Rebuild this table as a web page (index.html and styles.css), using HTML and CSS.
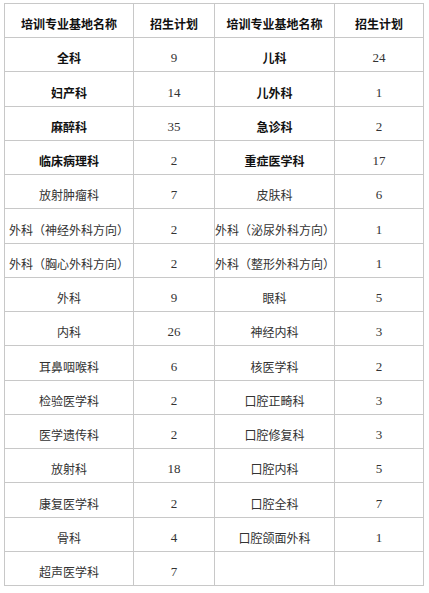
FILE: index.html
```html
<!DOCTYPE html>
<html lang="zh-CN">
<head>
<meta charset="utf-8">
<link rel="stylesheet" href="styles.css">
</head>
<body>
<table class="plan">
  <colgroup>
    <col class="c-name1"><col class="c-num1"><col class="c-name2"><col class="c-num2">
  </colgroup>
  <tr class="r34 head"><td>培训专业基地名称</td><td>招生计划</td><td>培训专业基地名称</td><td>招生计划</td></tr>
  <tr class="r34"><td class="b">全科</td><td class="n">9</td><td class="b">儿科</td><td class="n">24</td></tr>
  <tr class="r35"><td class="b">妇产科</td><td class="n">14</td><td class="b">儿外科</td><td class="n">1</td></tr>
  <tr class="r34"><td class="b">麻醉科</td><td class="n">35</td><td class="b">急诊科</td><td class="n">2</td></tr>
  <tr class="r34"><td class="b">临床病理科</td><td class="n">2</td><td class="b">重症医学科</td><td class="n">17</td></tr>
  <tr class="r34"><td>放射肿瘤科</td><td class="n">7</td><td>皮肤科</td><td class="n">6</td></tr>
  <tr class="r35"><td>外科（神经外科方向）</td><td class="n">2</td><td>外科（泌尿外科方向）</td><td class="n">1</td></tr>
  <tr class="r34"><td>外科（胸心外科方向）</td><td class="n">2</td><td>外科（整形外科方向）</td><td class="n">1</td></tr>
  <tr class="r34"><td>外科</td><td class="n">9</td><td>眼科</td><td class="n">5</td></tr>
  <tr class="r34"><td>内科</td><td class="n">26</td><td>神经内科</td><td class="n">3</td></tr>
  <tr class="r35"><td>耳鼻咽喉科</td><td class="n">6</td><td>核医学科</td><td class="n">2</td></tr>
  <tr class="r34"><td>检验医学科</td><td class="n">2</td><td>口腔正畸科</td><td class="n">3</td></tr>
  <tr class="r34"><td>医学遗传科</td><td class="n">2</td><td>口腔修复科</td><td class="n">3</td></tr>
  <tr class="r34"><td>放射科</td><td class="n">18</td><td>口腔内科</td><td class="n">5</td></tr>
  <tr class="r35"><td>康复医学科</td><td class="n">2</td><td>口腔全科</td><td class="n">7</td></tr>
  <tr class="r34"><td>骨科</td><td class="n">4</td><td>口腔颌面外科</td><td class="n">1</td></tr>
  <tr class="r34"><td>超声医学科</td><td class="n">7</td><td></td><td></td></tr>
</table>
</body>
</html>
```
FILE: styles.css
```css
html, body {
  margin: 0;
  padding: 0;
  background: #ffffff;
}
body {
  padding: 3px 0 0 4px;
  font-family: "Noto Sans CJK SC", "Noto Sans", sans-serif;
  font-size: 12px;
  color: #333333;
}
.plan {
  border-collapse: collapse;
  table-layout: fixed;
  width: 420px;
}
.c-name1 { width: 129px; }
.c-num1 { width: 81px; }
.c-name2 { width: 120px; }
.c-num2 { width: 89px; }
.plan td {
  border: 1px solid #c8c8c8;
  text-align: center;
  vertical-align: middle;
  padding: 7px 0 0 0;
  line-height: 14px;
  white-space: nowrap;
  overflow: hidden;
}
.r34 td { height: 26px; }
.r35 td { height: 27px; }
.head td {
  font-weight: bold;
  color: #111111;
}
.plan td.b {
  font-weight: bold;
  color: #111111;
}
.plan td.n {
  font-family: "Liberation Serif", "Noto Sans CJK SC", serif;
  font-size: 13px;
}
```
